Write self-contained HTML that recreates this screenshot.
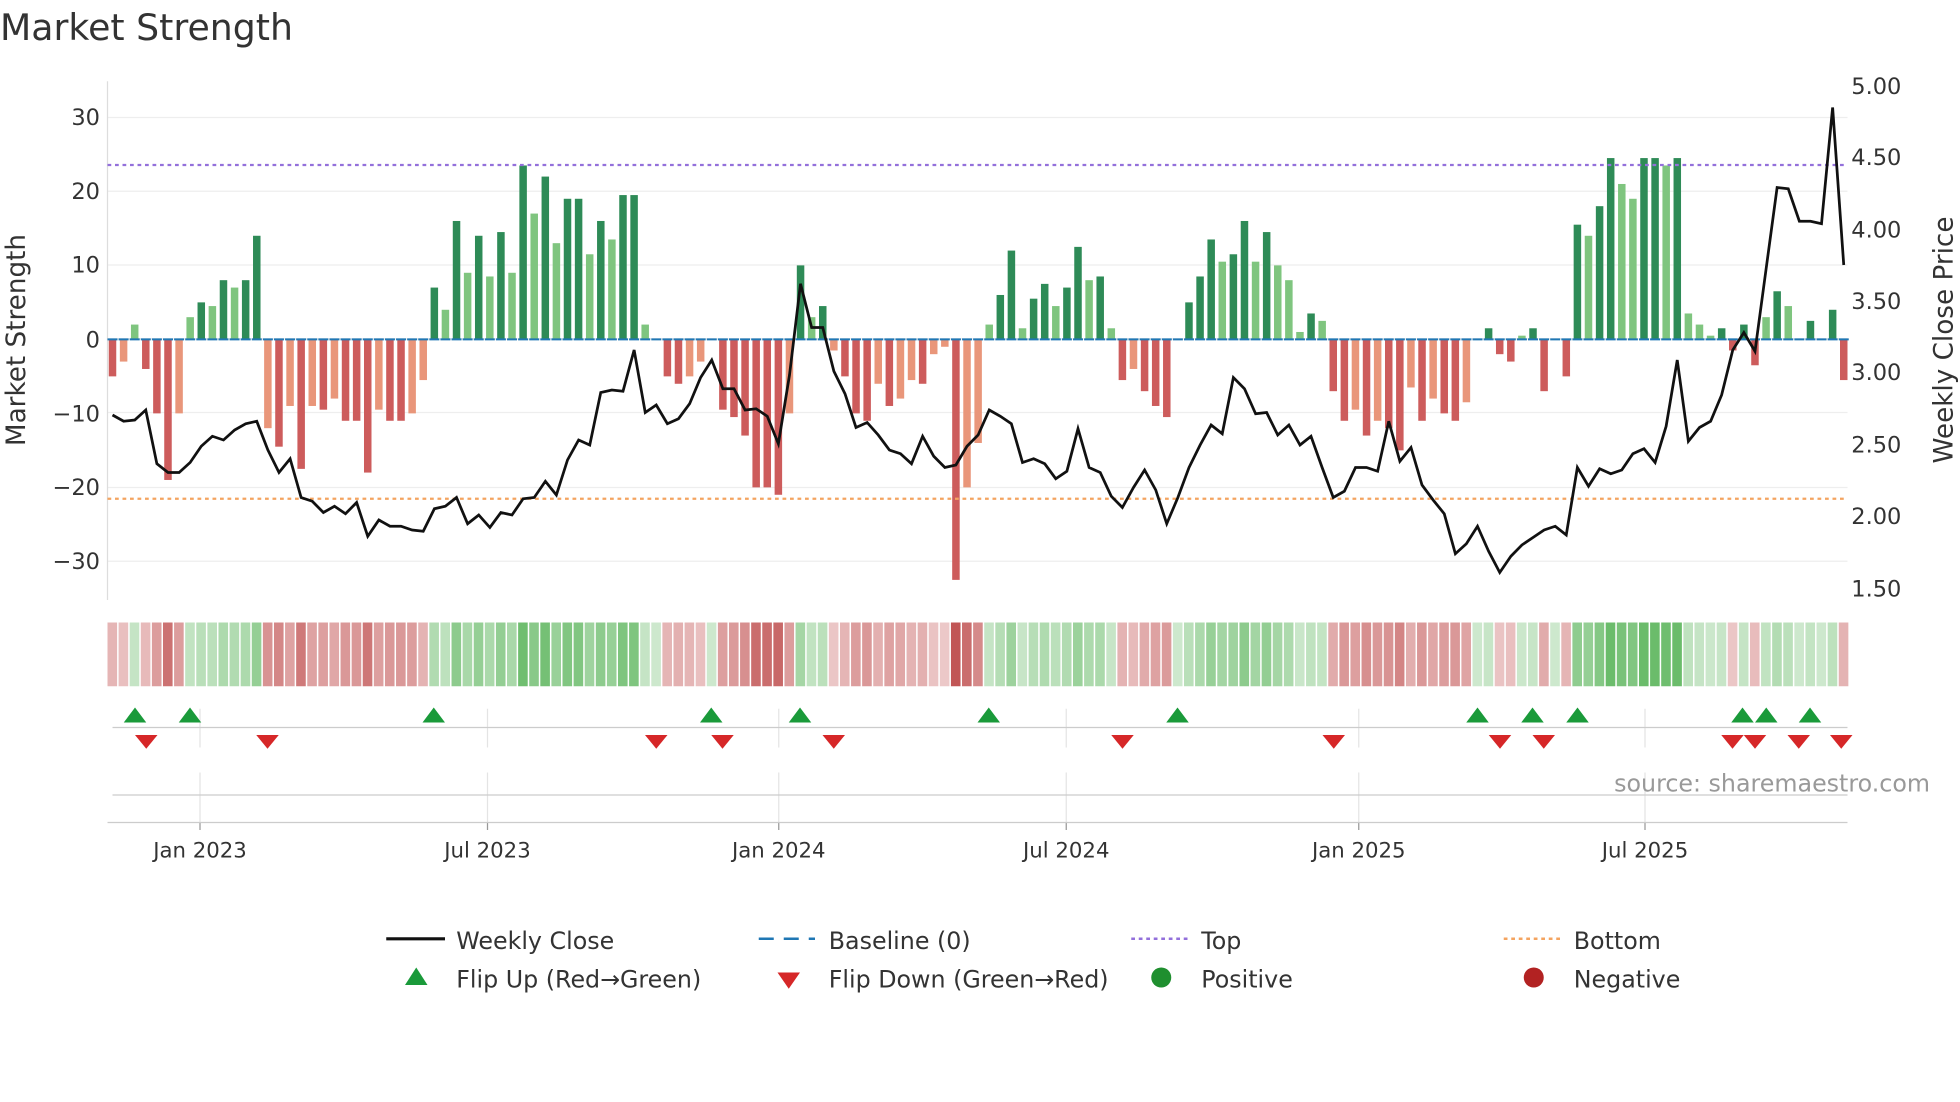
<!DOCTYPE html>
<html><head><meta charset="utf-8">
<style>
html,body{margin:0;padding:0;background:#fff;}
svg{display:block;font-family:"DejaVu Sans","Liberation Sans",sans-serif;}
</style></head>
<body>
<svg id="s" width="1960" height="1102" viewBox="0 0 1568 881.6" xmlns="http://www.w3.org/2000/svg">
<rect width="1568" height="882" fill="#fff"/>
<text x="0" y="32" font-size="29" fill="#333">Market Strength</text>
<g id="grid"></g>
<line x1="86" y1="65" x2="86" y2="480" stroke="#ddd"/>
<g font-size="18" fill="#333" text-anchor="end">
<text x="80" y="100">30</text><text x="80" y="159">20</text><text x="80" y="218">10</text><text x="80" y="278">0</text>
<text x="80" y="337">−10</text><text x="80" y="396">−20</text><text x="80" y="455">−30</text>
</g>
<g font-size="18" fill="#333">
<text x="1481" y="75">5.00</text><text x="1481" y="132">4.50</text><text x="1481" y="190">4.00</text><text x="1481" y="247">3.50</text>
<text x="1481" y="304">3.00</text><text x="1481" y="362">2.50</text><text x="1481" y="419">2.00</text><text x="1481" y="477">1.50</text>
</g>
<text transform="translate(20,272) rotate(-90)" font-size="21" fill="#333" text-anchor="middle">Market Strength</text>
<text transform="translate(1562,272) rotate(-90)" font-size="21" fill="#333" text-anchor="middle">Weekly Close Price</text>
<g id="bars"></g>
<line x1="86" y1="132" x2="1478" y2="132" stroke="#9370db" stroke-width="1.8" stroke-dasharray="3,3"/>
<line x1="86" y1="399" x2="1478" y2="399" stroke="#f4a460" stroke-width="1.8" stroke-dasharray="3,3"/>
<polyline id="price" fill="none" stroke="#111" stroke-width="2.2"/>
<g id="heat"></g>
<line x1="90" y1="582" x2="1478" y2="582" stroke="#ccc"/>
<line x1="90" y1="636" x2="1478" y2="636" stroke="#ccc"/>
<line x1="86" y1="658" x2="1478" y2="658" stroke="#ccc"/>
<g id="flips"></g>
<text x="1544" y="633" font-size="19" fill="#999" text-anchor="end">source: sharemaestro.com</text>
<g font-size="17" fill="#333" text-anchor="middle">
<text x="160" y="686">Jan 2023</text><text x="390" y="686">Jul 2023</text><text x="623" y="686">Jan 2024</text>
<text x="853" y="686">Jul 2024</text><text x="1087" y="686">Jan 2025</text><text x="1316" y="686">Jul 2025</text>
</g>
<g font-size="19" fill="#333">
<line x1="309" y1="751" x2="356" y2="751" stroke="#111" stroke-width="2.5"/><text x="365" y="759">Weekly Close</text>
<line x1="607" y1="751" x2="652" y2="751" stroke="#1f77b4" stroke-width="2" stroke-dasharray="12,8"/><text x="663" y="759">Baseline (0)</text>
<line x1="905" y1="751" x2="950" y2="751" stroke="#9370db" stroke-width="2" stroke-dasharray="3,3"/><text x="961" y="759">Top</text>
<line x1="1203" y1="751" x2="1248" y2="751" stroke="#f4a460" stroke-width="2" stroke-dasharray="3,3"/><text x="1259" y="759">Bottom</text>
<polygon points="324,788 342,788 333,774" fill="#1a9a3a"/><text x="365" y="790">Flip Up (Red→Green)</text>
<polygon points="622,778 640,778 631,791" fill="#d62728"/><text x="663" y="790">Flip Down (Green→Red)</text>
<circle cx="929" cy="782" r="8" fill="#1f8f2f"/><text x="961" y="790">Positive</text>
<circle cx="1227" cy="782" r="8" fill="#b22222"/><text x="1259" y="790">Negative</text>
</g>
</svg>
<script>
var NS="http://www.w3.org/2000/svg";
function el(p,t,a){var e=document.createElementNS(NS,t);for(var k in a)e.setAttribute(k,a[k]);document.getElementById(p).appendChild(e);return e;}
var V=[-5,-3,2,-4,-10,-19,-10,3,5,4.5,8,7,8,14,-12,-14.5,-9,-17.5,-9,-9.5,-8,-11,-11,-18,-9.5,-11,-11,-10,-5.5,7,4,16,9,14,8.5,14.5,9,23.5,17,22,13,19,19,11.5,16,13.5,19.5,19.5,2,0,-5,-6,-5,-3,0,-9.5,-10.5,-13,-20,-20,-21,-10,10,3,4.5,-1.5,-5,-10,-11,-6,-9,-8,-5.5,-6,-2,-1,-32.5,-20,-14,2,6,12,1.5,5.5,7.5,4.5,7,12.5,8,8.5,1.5,-5.5,-4,-7,-9,-10.5,0,5,8.5,13.5,10.5,11.5,16,10.5,14.5,10,8,1,3.5,2.5,-7,-11,-9.5,-13,-11,-12,-15,-6.5,-11,-8,-10,-11,-8.5,0,1.5,-2,-3,0.5,1.5,-7,0,-5,15.5,14,18,24.5,21,19,24.5,24.5,23.5,24.5,3.5,2,0.5,1.5,-1.5,2,-3.5,3,6.5,4.5,0,2.5,0,4,-5.5];
var P=[332,337,336,328,371,378,378,370,357,349,352,344,339,337,360,378,367,398,401,410,405,411,402,429,416,421,421,424,425,407,405,398,419,412,422,410,412,399,398,385,396,368,352,356,314,312,313,280,330,324,339,335,323,302,288,311,311,328,327,333,355,300,227,262,262,297,315,342,338,348,360,363,371,349,365,374,372,357,348,328,333,339,370,367,371,383,377,343,374,378,397,406,390,376,392,419,398,374,356,340,347,302,311,331,330,348,340,356,349,374,398,393,374,374,377,337,369,358,388,400,411,443,435,421,441,458,445,436,430,424,421,428,374,389,375,379,376,363,359,370,341,288,353,342,337,316,280,266,281,215,150,151,177,177,179,86,212];
var n=V.length,dx=(1475-90)/(n-1),z=271.5,u=5.92;
[94,153,212,271,330,390,449].forEach(function(y){el("grid","line",{x1:86,x2:1478,y1:y,y2:y,stroke:"#eee"});});
[160,390,623,853,1087,1316].forEach(function(x){el("grid","line",{x1:x,x2:x,y1:567,y2:598,stroke:"#e4e4e4"});el("grid","line",{x1:x,x2:x,y1:618,y2:658,stroke:"#e4e4e4"});el("grid","line",{x1:x,x2:x,y1:658,y2:664,stroke:"#999"});});
var pts=[];
for(var i=0;i<n;i++){var x=90+i*dx,v=V[i],pv=i?Math.abs(V[i-1]):0,dark=Math.abs(v)>=pv;
 var c=v>=0?(dark?"#2e8b57":"#7fc57f"):(dark?"#cd5c5c":"#e9967a");
 if(v!=0)el("bars","rect",{x:x-3,width:6,y:v>0?z-v*u:z,height:Math.abs(v)*u,fill:c});
 el("bars","line",{x1:x-4,x2:x+4,y1:z,y2:z,stroke:"#1f77b4","stroke-width":1.6});
 pts.push(x.toFixed(1)+","+P[i]);
 var m=Math.min(Math.abs(v)/25,1),hc;
 if(v>=0)hc="rgb("+Math.round(205-100*m)+","+Math.round(232-45*m)+","+Math.round(205-100*m)+")";
 else hc="rgb("+Math.round(238-45*m)+","+Math.round(205-120*m)+","+Math.round(205-120*m)+")";
 el("heat","rect",{x:x-4,y:498,width:dx-1.2,height:51,fill:hc});
}
document.getElementById("price").setAttribute("points",pts.join(" "));
[108,152,347,569,640,791,942,1182,1226,1262,1394,1413,1448].forEach(function(x){el("flips","polygon",{points:(x-9)+",578 "+(x+9)+",578 "+x+",566",fill:"#1a9a3a"});});
[117,214,525,578,667,898,1067,1200,1235,1386,1404,1439,1473].forEach(function(x){el("flips","polygon",{points:(x-9)+",588 "+(x+9)+",588 "+x+",599",fill:"#d62728"});});
</script>
</body></html>
